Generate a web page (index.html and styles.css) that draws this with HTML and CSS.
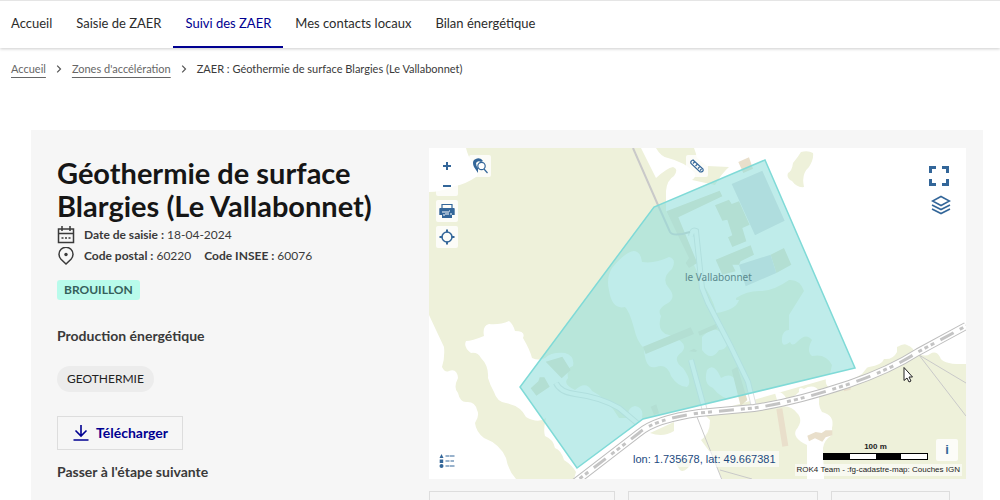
FILE: index.html
```html
<!DOCTYPE html>
<html lang="fr">
<head>
<meta charset="utf-8">
<title>ZAER : Géothermie de surface Blargies (Le Vallabonnet)</title>
<link rel="stylesheet" href="styles.css">
</head>
<body>
<header class="header">
  <nav class="nav">
    <a class="nav-link" href="#">Accueil</a>
    <a class="nav-link" href="#">Saisie de ZAER</a>
    <a class="nav-link active" href="#" aria-current="page">Suivi des ZAER</a>
    <a class="nav-link" href="#">Mes contacts locaux</a>
    <a class="nav-link" href="#">Bilan énergétique</a>
  </nav>
</header>
<nav class="crumbs">
  <a class="crumb" href="#">Accueil</a>
  <svg class="chevron" viewBox="0 0 5 8"><path d="M.7.7 4 4 .7 7.300"/></svg>
  <a class="crumb" href="#">Zones d'accélération</a>
  <svg class="chevron" viewBox="0 0 5 8"><path d="M.7.7 4 4 .7 7.300"/></svg>
  <span class="current">ZAER : Géothermie de surface Blargies (Le Vallabonnet)</span>
</nav>
<main class="panel">
  <section class="details">
    <h1 class="title">Géothermie de surface Blargies (Le Vallabonnet)</h1>
    <p class="meta">
      <svg class="meta-icon" viewBox="0 0 18 18"><path d="M1.500 3h15v13.500h-15zM1.500 7.500h15M5 0v5M13 0v5"/><path class="dots" d="M4.500 12h2M8 12h2M11.500 12h2"/></svg>
      <span><b>Date de saisie :</b> 18-04-2024</span>
    </p>
    <p class="meta">
      <svg class="meta-icon" viewBox="0 0 18 18"><path d="M9 17 4 12.200a7 7 0 1 1 10 0z"/><circle class="dot" cx="9" cy="7.500" r="1.700"/></svg>
      <span><b>Code postal :</b> 60220</span>
      <span class="insee"><b>Code INSEE :</b> 60076</span>
    </p>
    <p class="badge">BROUILLON</p>
    <h2 class="subtitle">Production énergétique</h2>
    <p class="tag">GEOTHERMIE</p>
    <button class="download" type="button">
      <svg class="download-icon" viewBox="0 0 16 16"><path d="M8 0v11M2.500 5.500 8 11l5.500-5.500M.5 15h15"/></svg>
      Télécharger
    </button>
    <h2 class="subtitle next">Passer à l'étape suivante</h2>
  </section>
  <section class="side">
    <div class="map">
      <svg class="map-canvas" viewBox="429 148 537 331" preserveAspectRatio="xMidYMid slice">
        <g class="land">
          <path d="M466 148Q468 157 473 163Q480 171 476 177Q466 184 455 186Q440 192 429 192V315Q436 330 444 347Q445 358 442 367Q445 373 449 371Q457 368 458 378Q453 388 458 393Q460 402 466 402Q475 401 477 410Q480 415 475 423Q476 432 484 438Q500 444 506 458Q508 470 516 479H574L576 472Q572 465 564 460Q561 450 555 448Q553 439 545 436Q543 430 546 418Q538 424 526 417Q521 406 506 403Q497 402 494 392Q490 385 488 378Q489 366 481 358Q478 352 471 353Q463 347 466 341Q472 341 484 336Q482 326 489 324Q500 325 509 321Q513 324 515 331Q526 331 523 338Q530 350 532 358Q539 361 545 358Q551 352 565 353Q575 356 573 366Q566 368 568 378Q562 384 575 390Q586 380 592 391Q607 398 619 418H629Q626 408 635 406Q644 408 642 417L643 419Q690 407 830 374L832 365Q826 353 812 356Q806 351 812 340Q806 332 797 342Q792 347 790 342Q781 349 782 338Q783 330 789 330V315L804 291Q800 279 789 280Q775 290 762 291Q748 290 736 298Q737 305 729 308L716 311Q712 297 701 281L691 258 666 211V191Q667 180 674 176Q679 169 673 167Q667 168 656 178L641 148z"/>
          <path d="M656 148H694Q696 153 697 158L707 166 729 167Q722 173 715 185L692 180Q697 177 694 172Q684 162 668 158Q661 157 656 148zM788 173Q792 171 793 163Q798 157 801 152Q808 150 813 153Q814 159 809 167Q801 174 804 187Q797 188 792 181Q786 178 788 173zM704 414 855 371 869 367Q882 365 884 359Q893 360 897 352V347Q904 343 907 345Q914 348 914 352Q925 358 930 354Q936 350 940 357Q942 365 966 364V479H722L712 455 701 440Q710 434 710 420zM650 433 674 422V431Q663 438 650 433zM676 464Q686 454 693 462Q684 474 680 470z"/>
        </g>
        <g class="clearing">
          <path d="M612 268Q625 252 634 251Q641 252 642 262Q655 264 669 257Q677 259 672 269Q661 278 668 287Q677 297 668 303Q656 309 661 316Q656 332 669 335Q690 343 682 352Q671 359 683 368Q693 382 687 387Q678 387 671 376Q667 363 656 367Q645 370 644 348Q637 342 634 328Q629 310 625 307Q612 310 609 290Q606 278 612 268zM702 337Q710 328 717 330L729 337Q728 350 719 350Q711 362 702 350zM707 370Q714 362 721 378Q730 372 736 380Q742 390 735 400Q721 399 713 388Q703 385 707 370zM716 300H739Q736 310 716 313z"/>
          <path d="M775 393Q782 390 786 398Q792 399 799 392Q798 386 804 389Q814 383 820 392Q817 405 822 412Q835 415 832 428V435Q824 440 823 448L824 479H807V445Q792 438 796 430Q804 420 797 413Q790 404 779 407zM826 378 870 364 862 374 835 389Q824 388 826 378z"/>
        </g>
        <g class="building" transform="translate(629 148) scale(.3333)">
          <path d="M258 172 300 155 308 168 330 160 362 230 340 240 352 280 310 297 297 268 310 262 295 215 280 218zM260 335 365 292 375 320 335 340 330 350 310 350 320 370 280 380zM112 190 272 128 280 145 148 208 205 345 180 360 170 345 180 330zM425 320 465 300 487 350 442 375zM42 596 185 538 195 558 50 618zM207 551 260 528 265 541 212 563zM308 666 325 656 355 756 335 774zM180 610 195 602 205 608 200 612z"/>
          <path d="M-250 641-200 626-175 666-202 691zM-295 721-272 700-268 688-254 688-238 716-278 743zM65 776 82 769 90 796 75 801z"/>
          <path class="tan" d="M328 42 360 28 372 62 343 75zM442 783 460 781 478 893 460 896zM535 863 560 852 578 855 590 847 610 847 610 862 590 868 580 881 558 871 540 880zM643 717 665 710 665 725 645 730z"/>
          <path class="roof" d="M308 108 400 68 467 218 378 262zM330 350 425 320 442 375 350 415z"/>
        </g>
        <g class="track">
          <path class="edge" d="M691 236Q692 229 696 231L698 250Q700 270 702 288L708 303 730 345 748 382 754 407M691 360 705 411M556 383Q560 392 575 394Q600 397 619 408L637 423"/>
          <path class="core" d="M691 236Q692 229 696 231L698 250Q700 270 702 288L708 303 730 345 748 382 754 407M691 360 705 411M556 383Q560 392 575 394Q600 397 619 408L637 423"/>
        </g>
        <path class="lane" d="M633 148 658 205 670 232Q673 237 690 232"/>
        <path class="path-line" d="M697 417 722 480M720 470 752 479M919 355 966 383M919 355 966 416"/>
        <path class="road-edge" d="M574 483 639 433Q655 419 699 413L754 408Q795 402 849 384Q890 370 918 352L966 326"/>
        <path class="road-core" d="M574 483 639 433Q655 419 699 413L754 408Q795 402 849 384Q890 370 918 352L966 326"/>
        <path class="road-dash" d="M574 483 639 433Q655 419 699 413L754 408Q795 402 849 384Q890 370 918 352L966 326"/>
        <path class="zone" d="M765 160 855 368 643 419 577 468 520 387 654 207z"/>
        <text class="place" x="685" y="281">le Vallabonnet</text>
        <path class="cursor" d="M904 367.500v13l3-2.500 2 4 2-1-2-4h3.500z"/>
      </svg>
      <div class="zoom-group">
        <button class="tool" type="button" aria-label="Zoom avant"><svg class="glyph" viewBox="0 0 16 16"><path class="heavy" d="M8 4v8M4 8h8"/></svg></button>
        <button class="tool" type="button" aria-label="Zoom arrière"><svg class="glyph" viewBox="0 0 16 16"><path class="heavy" d="M4 8h8"/></svg></button>
      </div>
      <button class="tool boxed print" type="button" aria-label="Imprimer"><svg class="glyph" viewBox="0 0 16 16"><path d="M3 5V1.500h10V5"/><path class="solid" d="M1 5h14q.7 0 .7 1v6h-2.700v3H3v-3H.3V6q0-1 .7-1z"/><path class="light" d="M3 9h3M7 8v4M9 8v4M11 11h2M4 12h2M10 8h1"/></svg></button>
      <button class="tool boxed locate" type="button" aria-label="Me localiser"><svg class="glyph" viewBox="0 0 16 16"><circle class="ring" cx="8" cy="8" r="5"/><path class="heavy" d="M8 .5v3M8 12.500v3M.5 8h3M12.500 8h3"/></svg></button>
      <button class="tool boxed search" type="button" aria-label="Rechercher"><svg class="glyph" viewBox="0 0 16 16"><path class="solid" d="M6 15 2 9Q-1 2 5 .5 9-.5 11 3L9 4Q6 2 4 5 4 8 6 10z"/><circle class="lens" cx="9.500" cy="8" r="3.700"/><path d="m12 11 3.500 4"/></svg></button>
      <button class="tool boxed measure" type="button" aria-label="Mesurer"><svg class="glyph" viewBox="0 0 16 16"><path d="M2 5.500Q1 3 4 2L14 11Q15 14 11 14zM4 5.500l1.500-1.500M6.500 8l1.500-1.500M9 10.500l1.500-1.500M11 12.500l1.500-1.500"/></svg></button>
      <button class="tool fullscreen" type="button" aria-label="Plein écran"><svg class="glyph" viewBox="0 0 20 20"><path class="corner" d="M1.500 7V1.500H7M13 1.500h5.500V7M18.500 13v5.500H13M7 18.500H1.500V13"/></svg></button>
      <button class="tool layers" type="button" aria-label="Couches"><svg class="glyph" viewBox="0 0 20 20"><path d="m10 1.500 8.500 4.500-8.500 4.500L1.500 6zM1 10l9 4.500 9-4.500M1 14l9 4.500 9-4.500"/></svg></button>
      <button class="tool legend" type="button" aria-label="Légende"><svg class="glyph" viewBox="0 0 16 16"><path class="solid" d="M2.500 1 4.500 5h-4zM.7 6.500h3.500V10H.7z"/><circle class="solid" cx="2.500" cy="13" r="2"/><path d="M6.500 3h3.500M10.500 3h5M6.500 8h4M11.500 8h3.500M6.500 13h3.500M10.500 13h5"/></svg></button>
      <button class="tool boxed info" type="button">i</button>
      <output class="coords">lon: 1.735678, lat: 49.667381</output>
      <div class="scale">
        <span class="scale-label">100 m</span>
        <div class="scale-bar"><i></i><i></i><i></i><i></i></div>
      </div>
      <small class="credit">ROK4 Team - :fg-cadastre-map: Couches IGN</small>
    </div>
    <div class="actions">
      <button class="action" type="button"></button>
      <button class="action" type="button"></button>
      <button class="action short" type="button"><svg class="action-icon" viewBox="0 0 14 14"><path d="M3 1h8v12H3z"/></svg></button>
    </div>
  </section>
</main>
</body>
</html>
```
FILE: styles.css
```css
* { box-sizing: border-box; }

body {
  margin: 0;
  height: 100vh;
  overflow: hidden;
  background: #fff;
  color: #3a3a3a;
  font: 12px/20px Lato, "Open Sans", sans-serif;
}

h1, h2, p { margin: 0; }

button {
  padding: 0;
  border: 0;
  background: none;
  font: inherit;
}

svg { display: block; fill: none; }

.header {
  height: 48px;
  border-top: 1px solid #e5e5e5;
  box-shadow: 0 1px 3px #0003;
}

.nav {
  display: flex;
  height: 47px;
  margin-left: -1px;
}

.nav-link {
  padding: 12px 12px 0;
  border-bottom: 2px solid transparent;
  color: #2c2c2c;
  font-size: 13px;
  text-decoration: none;
}

.nav-link.active {
  border-color: #000091;
  color: #000091;
}

.crumbs {
  display: flex;
  align-items: center;
  gap: 10px;
  padding: 11px 11px 0;
  font-size: 11px;
}

.crumb {
  color: #666;
  text-decoration: underline;
  text-underline-offset: 4px;
}

.chevron {
  width: 6px;
  height: 8px;
  stroke: #555;
  stroke-width: 1.2;
}

.panel {
  display: grid;
  grid-template-columns: 372px 1fr;
  margin: 51px 17px 0 31px;
  padding: 18px 17px 18px 26px;
  background: #f6f6f6;
}

.details {
  display: flex;
  flex-direction: column;
  align-items: flex-start;
  padding-top: 8px;
}

.title {
  margin-bottom: 2px;
  color: #161616;
  font-size: 29px;
  font-weight: 700;
  line-height: 33px;
}

.meta {
  display: flex;
  align-items: center;
  gap: 9px;
  height: 21px;
}

.meta b { font-weight: 700; }
.insee { margin-left: 4px; }

.meta-icon {
  width: 18px;
  height: 18px;
  stroke: #3a3a3a;
  stroke-width: 1.5;
}

.meta-icon .dots { stroke-width: 1.5; }
.meta-icon .dot { fill: #3a3a3a; stroke: none; }

.badge {
  margin-top: 14px;
  padding: 0 7px;
  border-radius: 3px;
  background: #b8fbeb;
  color: #35605a;
  font-weight: 700;
}

.subtitle {
  margin-top: 26px;
  font-size: 14px;
  font-weight: 700;
  line-height: 20px;
}

.tag {
  margin-top: 20px;
  padding: 3px 10px;
  border-radius: 13px;
  background: #ececec;
  color: #222;
}

.download {
  display: flex;
  align-items: center;
  gap: 7px;
  height: 34px;
  margin-top: 24px;
  padding: 0 14px 0 15px;
  border: 1px solid #ddd;
  color: #000091;
  font-size: 14px;
  font-weight: 700;
}

.download-icon {
  width: 16px;
  height: 16px;
  stroke: #000091;
  stroke-width: 1.6;
}

.next { margin-top: 12px; }

.map {
  position: relative;
  aspect-ratio: 537 / 331;
  overflow: hidden;
  background: #fff;
  color: #27598f;
}

.map-canvas { width: 100%; height: 100%; }

.land { fill: #eef1da; }
.clearing { fill: #fff; }
.building { fill: #e2dfc8; }
.building .tan { fill: #e9dfcb; }
.building .roof { fill: #dadce2; }
.track .edge { stroke: #dde1e2; stroke-width: 6; }
.track .core { stroke: #fff; stroke-width: 4; }
.lane { stroke: #c9c9c9; stroke-width: 2; }
.path-line { stroke: #c9c9c9; }
.road-edge { stroke: #bdbdbd; stroke-width: 8; }
.road-core { stroke: #fff; stroke-width: 6; }
.road-dash { stroke: #c4c4c4; stroke-width: 3; stroke-dasharray: 4 3 4 3 4 7 15 7; }

.place {
  fill: #5b8a8e;
  font: 10px "Noto Sans", sans-serif;
}

.zone {
  fill: #91dedb;
  fill-opacity: .58;
  stroke: #7fdad7;
  stroke-width: 1.5;
}

.cursor { fill: #fff; stroke: #222; }

.tool {
  position: absolute;
  display: grid;
  place-items: center;
  width: 22px;
  height: 22px;
  border-radius: 2px;
  color: #336699;
}

.boxed, .zoom-group { background: #fffc; }

.zoom-group {
  position: absolute;
  top: 8px;
  left: 7px;
  width: 22px;
  border-radius: 2px;
}

.zoom-group .tool { position: static; height: 20px; }

.glyph {
  width: 16px;
  height: 16px;
  stroke: currentColor;
  stroke-width: 1.2;
}

.glyph .heavy { stroke-width: 2; }
.glyph .ring { stroke-width: 1.5; }
.glyph .solid { fill: currentColor; stroke: none; }
.glyph .light { stroke: #fff; stroke-width: 1; }
.glyph .lens { fill: #fff; }
.glyph .corner { stroke-width: 3; }

.print { top: 52px; left: 7px; }
.locate { top: 78px; left: 7px; }
.search { top: 7px; left: 40px; }
.measure { top: 7px; left: 257px; }
.fullscreen { top: 17px; right: 16px; }
.layers { top: 46px; right: 14px; }
.fullscreen .glyph, .layers .glyph { width: 20px; height: 20px; }
.layers .glyph { stroke-width: 1.6; }
.legend { bottom: 7px; left: 7px; }

.info {
  right: 8px;
  bottom: 18px;
  font: bold 13px/20px "Liberation Sans", sans-serif;
}

.coords {
  position: absolute;
  left: 201px;
  bottom: 12px;
  padding: 0 3px;
  background: #fff9;
  color: #1c4a80;
  font: 11px/16px "Liberation Sans", sans-serif;
}

.scale {
  position: absolute;
  right: 38px;
  bottom: 19px;
  width: 105px;
  color: #222;
  text-align: center;
}

.scale-label {
  display: block;
  font: bold 8px/12px "Liberation Sans", sans-serif;
}

.scale-bar {
  display: grid;
  grid-template-columns: repeat(4, 1fr);
  height: 7px;
  border: 1px solid #000;
  background: #fff;
}

.scale-bar i:nth-child(odd) { background: #000; }

.credit {
  position: absolute;
  right: 4px;
  bottom: 3px;
  padding: 0 2px;
  background: #fff9;
  color: #222;
  font: 8px/12px "Liberation Sans", sans-serif;
}

.actions {
  display: grid;
  grid-template-columns: 186fr 190fr 119fr;
  gap: 13px;
  margin: 12px 16px 0 0;
}

.action {
  height: 34px;
  border: 1px solid #ddd;
}

.action-icon {
  width: 14px;
  height: 14px;
  margin-left: 16px;
  stroke: #000091;
  stroke-width: 2;
}
```
